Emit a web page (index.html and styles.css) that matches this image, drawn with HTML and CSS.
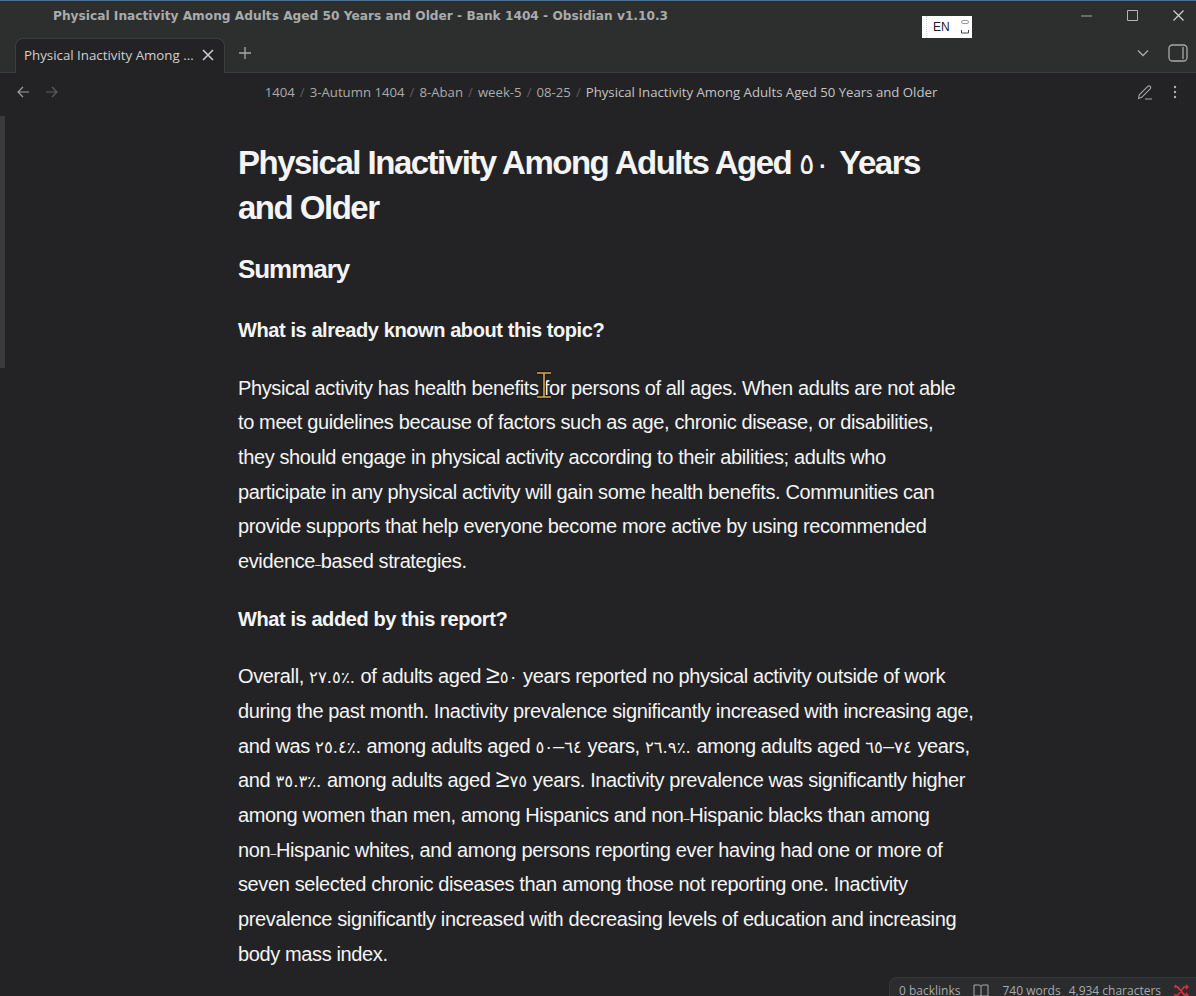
FILE: index.html
```html
<!DOCTYPE html>
<html lang="en">

<head>
    <meta charset="UTF-8">
    <meta name="viewport" content="width=device-width, initial-scale=1.0">
    <title>Physical Inactivity Among Adults Aged 50 Years and Older</title>
    <link rel="stylesheet" href="styles.css">
</head>

<body>
    <div class="app">
        <div class="titlebar">
            <div class="window-title">Physical Inactivity Among Adults Aged 50 Years and Older - Bank 1404 - Obsidian v1.10.3</div>
            <div class="window-btns">
                <svg width="14" height="14" viewBox="0 0 14 14"><path d="M1 7h11" stroke="#a6a8a8" fill="none"/></svg>
                <svg width="14" height="14" viewBox="0 0 14 14"><path d="M1.500 1.500h10v10h-10z" stroke="#b4b6b6" fill="none"/></svg>
                <svg width="14" height="14" viewBox="0 0 14 14"><path d="M1.500 1.500l10 10M11.500 1.500l-10 10" stroke="#d0d2d2" stroke-width="1.200" fill="none"/></svg>
            </div>
        </div>
        <div class="tabbar">
            <div class="tab">
                <span class="tab-name">Physical Inactivity Among ...</span>
                <svg width="14" height="14" viewBox="0 0 14 14"><path d="M2 2l10 10M12 2l-10 10" stroke="#d0d0d0" stroke-width="1.500" fill="none"/></svg>
            </div>
            <svg class="plus" width="14" height="14" viewBox="0 0 14 14"><path d="M7 1v12M1 7h12" stroke="#a8aaaa" stroke-width="1.300" fill="none"/></svg>
            <div class="tab-right">
                <svg width="12" height="8" viewBox="0 0 12 8"><path d="M1 1.500l5 5 5-5" stroke="#a8aaaa" stroke-width="1.300" fill="none"/></svg>
                <svg width="20" height="18" viewBox="0 0 20 18"><rect x="1" y="1" width="18" height="16" rx="3.500" stroke="#a8aaaa" stroke-width="1.300" fill="none"/><path d="M15 3v12" stroke="#a8aaaa" stroke-width="1.300"/></svg>
            </div>
        </div>
        <div class="navbar">
            <div class="nav-arrows">
                <svg width="14" height="14" viewBox="0 0 14 14"><path d="M13 7H2M7 2L2 7l5 5" stroke="#9c9e9e" stroke-width="1.200" fill="none"/></svg>
                <svg width="14" height="14" viewBox="0 0 14 14"><path d="M1 7h11M7 2l5 5-5 5" stroke="#5c5e5e" stroke-width="1.200" fill="none"/></svg>
            </div>
            <div class="crumbs">
                <span>1404</span><i>/</i><span>3-Autumn 1404</span><i>/</i><span>8-Aban</span><i>/</i><span>week-5</span><i>/</i><span>08-25</span><i>/</i><span class="current">Physical Inactivity Among Adults Aged 50 Years and Older</span>
            </div>
            <div class="nav-actions">
                <svg width="16" height="16" viewBox="0 0 16 16"><path d="M1.500 14.500l.8-3.600L10.800 2.400a1.600 1.600 0 0 1 2.400 2.400l-8.500 8.500zM8 15h7" stroke="#a8aaaa" stroke-width="1.100" fill="none"/></svg>
                <svg width="4" height="14" viewBox="0 0 4 14"><circle cx="2" cy="2" r="1.200" fill="#b0b2b2"/><circle cx="2" cy="7" r="1.200" fill="#b0b2b2"/><circle cx="2" cy="12" r="1.200" fill="#b0b2b2"/></svg>
            </div>
        </div>
        <div class="content">
            <div class="note">
                <h1>Physical Inactivity Among Adults Aged <span class="num">٥٠</span> Years and Older</h1>
                <h2>Summary</h2>
                <h3>What is already known about this topic?</h3>
                <p>Physical activity has health benefits for persons of all ages. When adults are not able to meet guidelines because of factors such as age, chronic disease, or disabilities, they should engage in physical activity according to their abilities; adults who participate in any physical activity will gain some health benefits. Communities can provide supports that help everyone become more active by using recommended <span class="nb">evidence<span class="hy">–</span>based</span> strategies.</p>
                <h3>What is added by this report?</h3>
                <p>Overall, <span class="num">٢٧.٥٪.</span> of adults aged <span class="nb"><span class="ge">≥</span><span class="num">٥٠</span></span> years reported no physical activity outside of work during the past month. Inactivity prevalence significantly increased with increasing age, and was <span class="num">٢٥.٤٪.</span> among adults aged <span class="nb"><span class="num">٥٠</span>–<span class="num">٦٤</span></span> years, <span class="num">٢٦.٩٪.</span> among adults aged <span class="nb"><span class="num">٦٥</span>–<span class="num">٧٤</span></span> years, and <span class="num">٣٥.٣٪.</span> among adults aged <span class="nb"><span class="ge">≥</span><span class="num">٧٥</span></span> years. Inactivity prevalence was significantly higher among women than men, among Hispanics and <span class="nb">non<span class="hy">–</span>Hispanic</span> blacks than among <span class="nb">non<span class="hy">–</span>Hispanic</span> whites, and among persons reporting ever having had one or more of seven selected chronic diseases than among those not reporting one. Inactivity prevalence significantly increased with decreasing levels of education and increasing body mass index.</p>
            </div>
        </div>
    </div>

    <div class="scroll-thumb"></div>
    <div class="lang-box">
        <span>EN</span>
        <svg width="10" height="18" viewBox="0 0 10 18"><rect x="1.500" y="2.500" width="7" height="3" rx="1.500" stroke="#999" fill="none"/><path d="M1.500 12v3h7v-3" stroke="#444" fill="none"/></svg>
    </div>
    <svg class="cursor" width="18" height="28" viewBox="0 0 18 28"><path d="M2 2h14M9 2v24M2 26h14" stroke="#1a1408" stroke-width="3.500" fill="none"/><path d="M2 2h14M9 2v24M2 26h14" stroke="#d8a955" stroke-width="1.600" fill="none"/></svg>
    <div class="status">
        <span>0 backlinks</span>
        <svg width="16" height="13" viewBox="0 0 16 13"><path d="M8 2.500V12M1 1h5a2 2 0 0 1 2 1.500A2 2 0 0 1 10 1h5v11H1z" stroke="#a8aaaa" fill="none"/></svg>
        <span>740 words</span>
        <span class="chars">4,934 characters</span>
        <svg class="sync" width="16" height="14" viewBox="0 0 16 14"><path d="M1 3h4l6 8h4M1 11h4l6-8h4M13 1l2 2-2 2M13 9l2 2-2 2M2 1l12 12" stroke="#d9303e" stroke-width="1.400" fill="none"/></svg>
    </div>
</body>

</html>
```

FILE: styles.css
```css
body {
    margin: 0;
    height: 996px;
    overflow: hidden;
    background-color: #232325;
    font-family: "Liberation Sans", Arial, sans-serif;
    color: #f4f4f4;
}

.app {
    display: flex;
    flex-direction: column;
    height: 996px;
}

.titlebar {
    display: flex;
    justify-content: space-between;
    align-items: center;
    height: 35px;
    flex-shrink: 0;
    padding-bottom: 4px;
    box-sizing: border-box;
    border-top: 1px solid #4f6f8f;
    background-color: #2d2f2f;
}

.window-title {
    padding-left: 53px;
    font-family: "DejaVu Sans", sans-serif;
    font-size: 12.200px;
    font-weight: bold;
    color: #a9abab;
}

.window-btns {
    display: flex;
    gap: 32px;
    padding-right: 10px;
}

.tabbar {
    display: flex;
    align-items: flex-end;
    height: 38px;
    flex-shrink: 0;
    padding-left: 15px;
    box-sizing: border-box;
    border-bottom: 1px solid #3c3e3e;
    background-color: #2d2f2f;
}

.tab {
    display: flex;
    justify-content: space-between;
    align-items: center;
    width: 210px;
    height: 35px;
    margin-bottom: -1px;
    padding: 0 9px 2px 8px;
    box-sizing: border-box;
    border: 1px solid #3c3e3e;
    border-bottom: none;
    border-radius: 8px 8px 0 0;
    background-color: #232325;
}

.tab-name {
    font-family: "Open Sans", sans-serif;
    font-size: 13.300px;
    color: #cfcfcf;
    white-space: nowrap;
}

.plus {
    margin: 0 0 12px 13px;
}

.tab-right {
    display: flex;
    align-items: center;
    gap: 19px;
    margin-left: auto;
    padding: 0 8px 10px 0;
}

.navbar {
    display: flex;
    align-items: center;
    height: 40px;
    flex-shrink: 0;
    padding: 0 19px 2px 16px;
    box-sizing: border-box;
}

.nav-arrows {
    display: flex;
    gap: 15px;
}

.crumbs {
    display: flex;
    flex: 1;
    justify-content: center;
    gap: 5px;
    padding-left: 6px;
    font-family: "Open Sans", sans-serif;
    font-size: 13.200px;
    color: #a9abab;
}

.crumbs i {
    font-style: normal;
    color: #5c5e5e;
}

.crumbs .current {
    color: #c4c4c4;
}

.nav-actions {
    display: flex;
    align-items: center;
    gap: 20px;
}

.content {
    flex: 1;
    padding-left: 238px;
    overflow: hidden;
}

.note {
    width: 736px;
    font-size: 20px;
    line-height: 34.670px;
    letter-spacing: -0.380px;
}

h1 {
    margin: 27px 0 0;
    font-size: 33px;
    line-height: 45px;
    letter-spacing: -1.500px;
}

h2 {
    margin: 21px 0 26px;
    font-size: 26px;
    line-height: 36px;
    letter-spacing: -1.050px;
}

h3 {
    margin: 23px 0 0;
    font-size: 20px;
    line-height: 34.670px;
    letter-spacing: -0.410px;
}

p {
    margin: 23px 0 0;
}

.num {
    unicode-bidi: isolate;
    direction: ltr;
    font-family: "DejaVu Sans", sans-serif;
    font-size: 16.500px;
    line-height: 0;
    letter-spacing: 0;
}

h1 .num {
    font-size: 29px;
    font-weight: normal;
}

.ge {
    font-size: 25px;
    line-height: 0;
    letter-spacing: 0;
}

.hy {
    font-size: 11px;
    line-height: 0;
}

.nb {
    white-space: nowrap;
}

.scroll-thumb {
    position: absolute;
    left: 0;
    top: 116px;
    width: 5px;
    height: 252px;
    background-color: #3a3a3c;
}

.lang-box {
    position: absolute;
    left: 922px;
    top: 16px;
    width: 50px;
    height: 22px;
    display: flex;
    justify-content: space-between;
    align-items: center;
    padding: 0 2px 0 11px;
    box-sizing: border-box;
    background-color: #fff;
    color: #222;
    font-size: 12px;
}

.lang-box::before {
    content: "";
    position: absolute;
    left: 4px;
    top: 0;
    height: 22px;
    border-left: 1px dotted #ccc;
}

.cursor {
    position: absolute;
    left: 535px;
    top: 371px;
}

.status {
    position: absolute;
    left: 889px;
    top: 977px;
    width: 307px;
    display: flex;
    align-items: center;
    gap: 13px;
    height: 27px;
    padding-left: 9px;
    box-sizing: border-box;
    border: 1px solid #343638;
    border-right: none;
    border-radius: 8px 0 0 0;
    background-color: #2a2c2e;
    font-family: "Open Sans", sans-serif;
    font-size: 12px;
    color: #a9abab;
}

.chars {
    margin-left: -5px;
}

.sync {
    margin-left: -1px;
}
```
